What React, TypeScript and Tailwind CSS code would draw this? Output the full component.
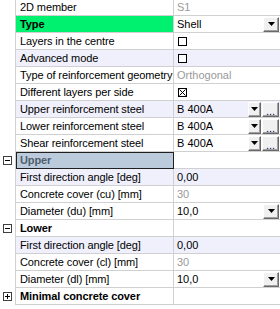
import React from "react";

type Row = {
  label: string;
  kind?: "text" | "header" | "selhead" | "green";
  value?: React.ReactNode;
  tint?: boolean;
  gutter?: "minus" | "plus";
};

const Arrow = () => (
  <svg width="7" height="4" viewBox="0 0 7 4">
    <path d="M0 0h7L3.5 4z" fill="#000" />
  </svg>
);

const Btn = ({ children, w }: { children: React.ReactNode; w: string }) => (
  <div
    className={`${w} h-[15px] flex items-center justify-center bg-[#f0f0f0] border border-t-white border-l-white border-r-[#696969] border-b-[#696969] shadow-[inset_-1px_-1px_0_#a0a0a0]`}
  >
    {children}
  </div>
);

const Combo = ({ text, dots }: { text: string; dots?: boolean }) => (
  <div className="flex items-center h-full w-full">
    <span className="pl-[3px] flex-1 text-black">{text}</span>
    {dots ? (
      <div className="flex items-center gap-[1px] mr-[1px]">
        <Btn w="w-[13px]">
          <Arrow />
        </Btn>
        <Btn w="w-[17px]">
          <span className="text-[11px] leading-none mt-[5px] text-[#000060]">...</span>
        </Btn>
      </div>
    ) : (
      <div className="mr-[1px]">
        <Btn w="w-[16px]">
          <Arrow />
        </Btn>
      </div>
    )}
  </div>
);

const Check = ({ x }: { x?: boolean }) => (
  <div className="pl-[4px] flex items-center h-full">
    <div className="w-[9px] h-[9px] border border-black bg-white relative">
      {x && (
        <svg className="absolute inset-0" width="7" height="7" viewBox="0 0 7 7">
          <path d="M0.5 0.5L6.5 6.5M6.5 0.5L0.5 6.5" stroke="#000" strokeWidth="1" />
        </svg>
      )}
    </div>
  </div>
);

const Gray = ({ t }: { t: string }) => <span className="pl-[3px] text-[#9a9a9a]">{t}</span>;
const Blk = ({ t }: { t: string }) => <span className="pl-[3px] text-black">{t}</span>;

const GutterIcon = ({ type }: { type: "minus" | "plus" }) => (
  <div className="w-[9px] h-[9px] border border-[#404040] bg-white relative">
    <div className="absolute left-[1px] top-[3px] w-[5px] h-[1px] bg-black" />
    {type === "plus" && <div className="absolute left-[3px] top-[1px] w-[1px] h-[5px] bg-black" />}
  </div>
);

const rows: Row[] = [
  { label: "2D member", value: <Gray t="S1" /> },
  { label: "Type", kind: "green", value: <Combo text="Shell" /> },
  { label: "Layers in the centre", value: <Check /> },
  { label: "Advanced mode", value: <Check />, tint: true },
  { label: "Type of reinforcement geometry", value: <Gray t="Orthogonal" /> },
  { label: "Different layers per side", value: <Check x /> },
  { label: "Upper reinforcement steel", value: <Combo text="B 400A" dots />, tint: true },
  { label: "Lower reinforcement steel", value: <Combo text="B 400A" dots /> },
  { label: "Shear reinforcement steel", value: <Combo text="B 400A" dots /> },
  { label: "Upper", kind: "selhead", gutter: "minus" },
  { label: "First direction angle [deg]", value: <Blk t="0,00" />, tint: true },
  { label: "Concrete cover (cu) [mm]", value: <Gray t="30" /> },
  { label: "Diameter (du) [mm]", value: <Combo text="10,0" /> },
  { label: "Lower", kind: "header", gutter: "minus" },
  { label: "First direction angle [deg]", value: <Blk t="0,00" />, tint: true },
  { label: "Concrete cover (cl) [mm]", value: <Gray t="30" /> },
  { label: "Diameter (dl) [mm]", value: <Combo text="10,0" /> },
  { label: "Minimal concrete cover", kind: "header", gutter: "plus" },
];

export default function App() {
  return (
    <div
      className="w-[280px] h-[309px] overflow-hidden bg-white text-[11px] leading-none text-black"
      style={{ fontFamily: "Tahoma, 'Liberation Sans', Arial, sans-serif" }}
    >
      <div className="mt-[-1px] flex flex-col">
        {rows.map((r, i) => {
          const bg = r.tint ? "bg-[#f0f0fc]" : "bg-white";
          let labelCls = `${bg} border-b border-r border-[#d0d0d0]`;
          let textCls = "pl-[4px] text-black";
          if (r.kind === "green") {
            labelCls = "bg-[#00f070] border-b border-r border-[#d0d0d0]";
            textCls = "pl-[4px] font-bold text-black";
          } else if (r.kind === "header") {
            textCls = "pl-[4px] font-bold text-black";
          } else if (r.kind === "selhead") {
            labelCls = "bg-[#bccbdb] border border-[#202020]";
            textCls = "pl-[3px] font-bold text-[#4f5f6f]";
          }
          return (
            <div key={i} className="flex h-[17px]">
              <div className="w-[16px] shrink-0 border-r border-[#d0d0d0] flex items-center justify-center pb-[1px]">
                {r.gutter && <GutterIcon type={r.gutter} />}
              </div>
              <div className={`w-[158px] shrink-0 overflow-hidden flex items-center ${labelCls}`}>
                <span className={`${textCls} whitespace-nowrap tracking-[-0.1px]`}>{r.label}</span>
              </div>
              <div className={`flex-1 flex items-center border-b border-[#d0d0d0] ${bg}`}>{r.value}</div>
            </div>
          );
        })}
      </div>
    </div>
  );
}
